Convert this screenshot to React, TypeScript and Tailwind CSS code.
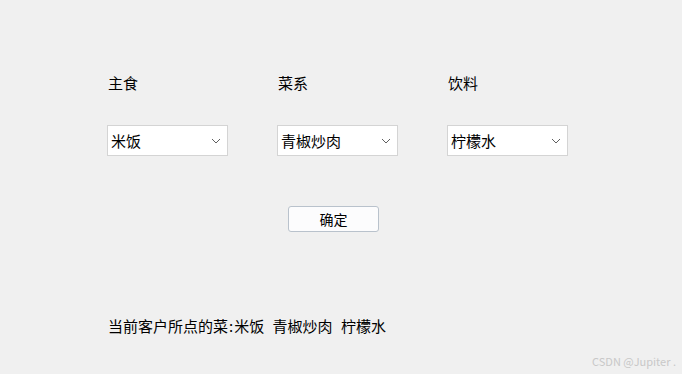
import React from "react";

const font = { fontFamily: '"Noto Sans CJK SC", "Noto Sans", sans-serif' };

function Chevron() {
  return (
    <svg width="10" height="6" viewBox="0 0 10 6" className="block">
      <path d="M1 1 L5 5 L9 1" fill="none" stroke="#606060" strokeWidth="1" />
    </svg>
  );
}

function Combo({ value }: { value: string }) {
  return (
    <div className="flex h-[31px] w-[121px] items-center justify-between border border-[#d4d4d4] bg-white pl-[3px] pr-[6px] text-[15px] leading-[20px] text-black">
      <span>{value}</span>
      <Chevron />
    </div>
  );
}

function Column({ label, value }: { label: string; value: string }) {
  return (
    <div className="flex w-[121px] flex-col">
      <div className="h-[20px] pl-[1px] text-[15px] leading-[20px] text-black">{label}</div>
      <div className="mt-[32px]">
        <Combo value={value} />
      </div>
    </div>
  );
}

export default function App() {
  return (
    <div className="relative h-[374px] w-[682px] overflow-hidden bg-[#f0f0f0]" style={font}>
      <div className="flex flex-col pl-[107px] pt-[73px]">
        <div className="flex gap-[49px]">
          <Column label="主食" value="米饭" />
          <Column label="菜系" value="青椒炒肉" />
          <Column label="饮料" value="柠檬水" />
        </div>
        <div className="ml-[181px] mt-[50px] flex h-[26px] w-[91px] items-center justify-center rounded-[3px] border border-[#b9c2cc] bg-[#fcfcfd] text-[14px] text-black">
          确定
        </div>
        <div className="mt-[84px] pl-[1px] text-[15px] leading-[20px] text-black [word-spacing:5px]">
          当前客户所点的菜<span className="mx-[1px]">:</span>米饭 青椒炒肉 柠檬水
        </div>
      </div>
      <div className="absolute bottom-[6px] right-[6px] text-[11px] leading-[14px] text-[#c8c8c8]">
        CSDN @Jupiter .
      </div>
    </div>
  );
}
